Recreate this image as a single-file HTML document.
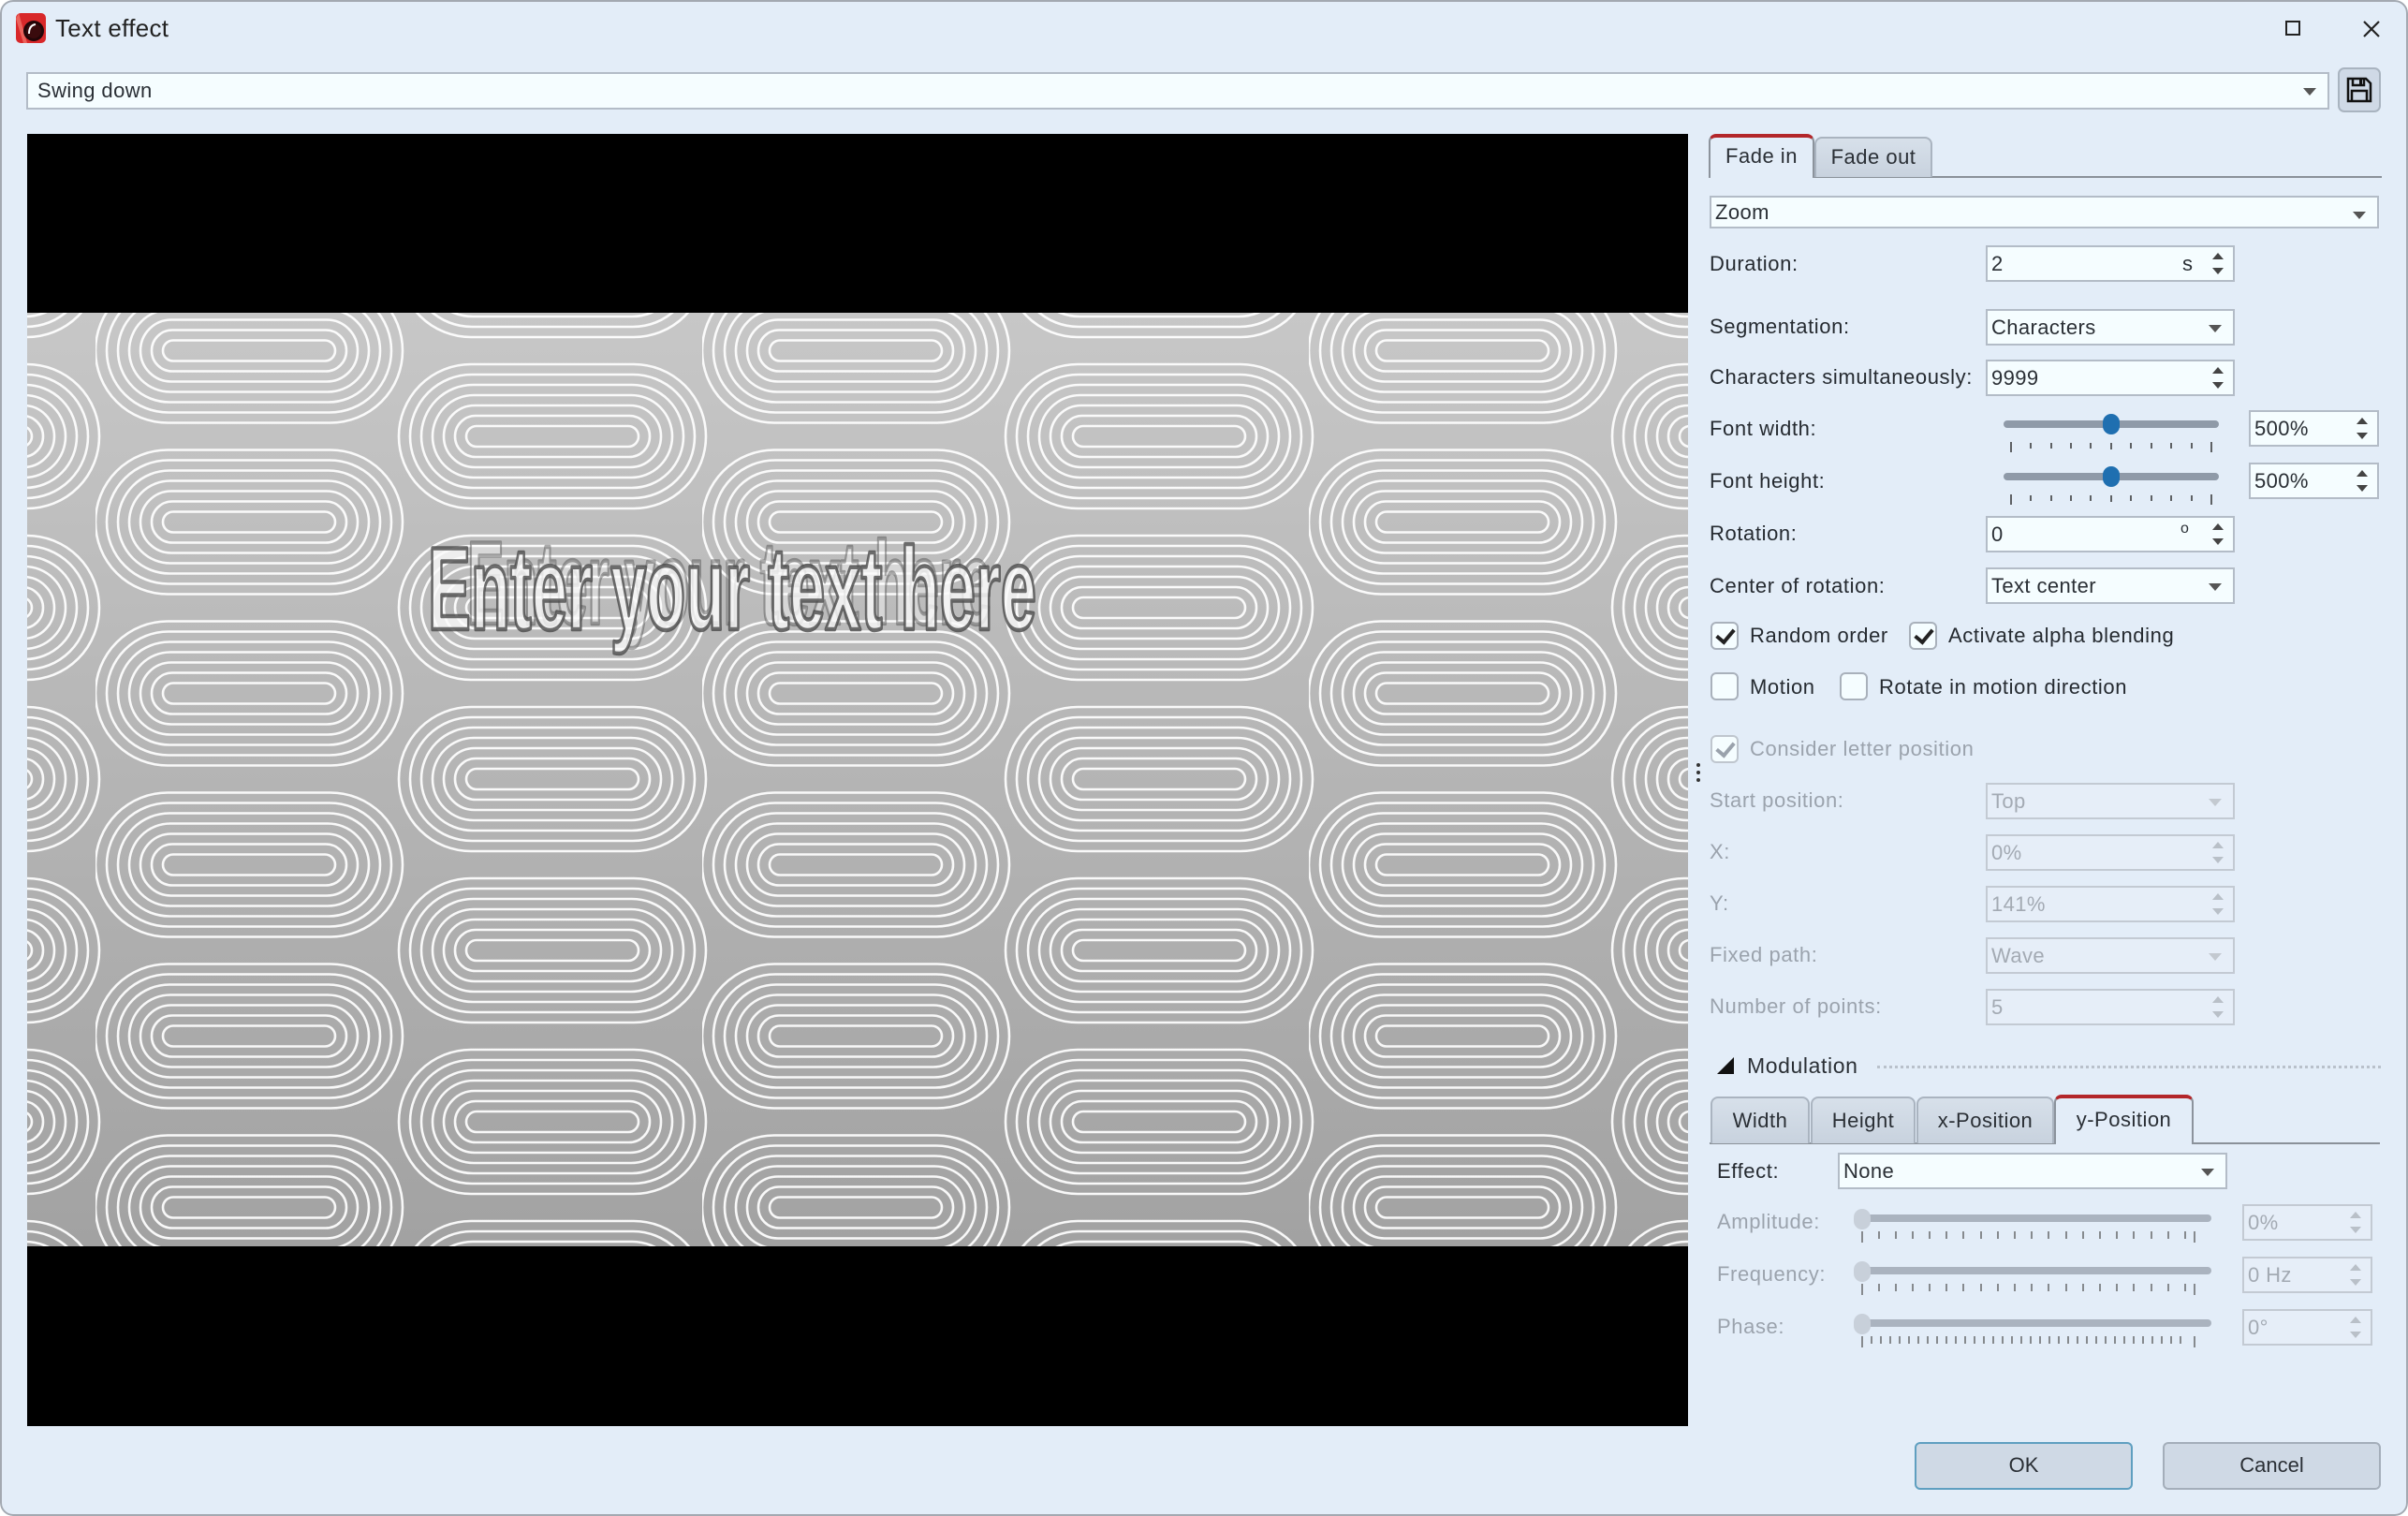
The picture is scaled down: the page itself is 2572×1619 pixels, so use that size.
<!DOCTYPE html>
<html><head><meta charset="utf-8"><style>
*{box-sizing:border-box;margin:0;padding:0}
body{width:2572px;height:1619px;overflow:hidden;background:#fff;font-family:"Liberation Sans",sans-serif;font-size:22px;color:#222}
#win{position:absolute;left:0;top:0;width:2572px;height:1619px;background:#e3edf8;border-radius:14px;overflow:hidden}
#in{position:absolute;left:1px;top:1px;width:2572px;height:1619px}
#bd{position:absolute;left:0;top:0;width:2572px;height:1619px;border:2px solid #a3a9b1;border-radius:14px;pointer-events:none}
.a{position:absolute}
.lbl{position:absolute;font-size:22px;color:#252a30;white-space:nowrap;line-height:26px;letter-spacing:.6px}
.dis{color:#9ba3ad}
.fld{position:absolute;background:#f5fdff;border:2px solid #b3bcc7;height:39px;font-size:22px;line-height:35px;padding-left:4px;color:#2a2f35;white-space:nowrap;letter-spacing:.4px}
.fld.d{color:#a3aab3;border-color:#c3cad3;background:#e6eef8}
.dd::after{content:"";position:absolute;right:12px;top:15px;border-left:7px solid transparent;border-right:7px solid transparent;border-top:8px solid #555}
.dd.d::after{border-top-color:#c3c9d0}
.sp::before{content:"";position:absolute;right:10px;top:6px;border-left:6px solid transparent;border-right:6px solid transparent;border-bottom:7px solid #444}
.sp::after{content:"";position:absolute;right:10px;bottom:6px;border-left:6px solid transparent;border-right:6px solid transparent;border-top:7px solid #444}
.sp.d::before{border-bottom-color:#b9c0c8}.sp.d::after{border-top-color:#b9c0c8}
.cb{position:absolute;width:30px;height:30px;border:2px solid #a9b1bb;border-radius:6px;background:#f5fdff}
.cb.on::after{content:"";position:absolute;left:8px;top:2px;width:8px;height:15px;border:solid #222;border-width:0 4px 4px 0;transform:rotate(40deg)}
.cb.dis2{border-color:#bfc6ce}.cb.dis2::after{border-color:#9aa2ac}
.tab{position:absolute;background:linear-gradient(#d7e0ea,#c8d2de);border:2px solid #aab4c0;border-bottom:none;border-radius:8px 8px 0 0;text-align:center;font-size:22px;color:#2a2f35;letter-spacing:.5px}
.tab.act{background:#e3edf8;border-color:#8c939c;border-top:4px solid #b3262a}
.trk{position:absolute;height:8px;border-radius:4px;background:#8f9aa8}
.thumb{position:absolute;width:18px;height:22px;border-radius:9px;background:#1f6fb0}
.btn{position:absolute;background:#cfd9e5;border:2px solid #a4aeba;border-radius:6px;text-align:center;font-size:22px;line-height:46px;color:#2a2f35}
</style></head><body>
<div id="win"><div id="in">
<svg class="a" style="left:16px;top:13px" width="32" height="32" viewBox="0 0 32 32"><rect width="32" height="32" rx="5" fill="#d8282a"/><path d="M3 0 L12 32 L8 32 L0 6Z" fill="#f47a70" opacity=".7"/><circle cx="19" cy="19" r="11" fill="#220608"/><circle cx="19" cy="19" r="8" fill="#3a0b0d"/><path d="M14 22 Q14 13 21 12" stroke="#fff" stroke-width="2" fill="none"/></svg>
<div class="lbl" style="left:58px;top:13px;font-size:26px;line-height:32px;color:#222;letter-spacing:.3px">Text effect</div>
<div class="a" style="left:2440px;top:21px;width:16px;height:16px;border:2px solid #222"></div>
<svg class="a" style="left:2523px;top:21px" width="18" height="18"><path d="M1 1L17 17M17 1L1 17" stroke="#222" stroke-width="2.2"/></svg>
<div class="fld dd" style="left:27px;top:76px;width:2460px;height:40px;background:#f5fdff;line-height:36px;padding-left:10px">Swing down</div>
<div class="a" style="left:2496px;top:71px;width:46px;height:48px;background:#cfd9e6;border:2px solid #a9b4c0;border-radius:7px"></div>
<svg class="a" style="left:2505px;top:81px" width="28" height="28" viewBox="0 0 28 28"><path d="M2 2H21L26 7V26H2Z" fill="none" stroke="#111" stroke-width="2.5"/><path d="M7 2V9H19V2" fill="none" stroke="#111" stroke-width="2.5"/><rect x="14" y="3" width="3" height="5" fill="#111"/><path d="M6 26V15H22V26" fill="none" stroke="#111" stroke-width="2.5"/></svg>
<div class="a" style="left:28px;top:142px;width:1774px;height:1380px;background:#000"></div>
<svg class="a" style="left:28px;top:333px" width="1774" height="997">
<defs>
<linearGradient id="g" x1="0" y1="0" x2="0" y2="1"><stop offset="0" stop-color="#c7c7c7"/><stop offset="1" stop-color="#a2a2a2"/></linearGradient>
<g id="pill" fill="none" stroke="#fff" stroke-width="2.6" opacity=".92">
<rect x="-92" y="-11" width="184" height="22" rx="11"/>
<rect x="-104" y="-22" width="208" height="44" rx="22"/>
<rect x="-116" y="-33" width="232" height="66" rx="33"/>
<rect x="-128" y="-44" width="256" height="88" rx="44"/>
<rect x="-140" y="-55" width="280" height="110" rx="55"/>
<rect x="-152" y="-66" width="304" height="132" rx="66"/>
<rect x="-164" y="-77" width="328" height="154" rx="77"/>
</g>
<pattern id="p" width="648" height="183" patternUnits="userSpaceOnUse" x="73" y="-51">
<use href="#pill" x="164" y="91.5"/>
<use href="#pill" x="488" y="0"/><use href="#pill" x="488" y="183"/>
<use href="#pill" x="-160" y="0"/><use href="#pill" x="-160" y="183"/>
</pattern>
</defs>
<rect width="1774" height="997" fill="url(#g)"/>
<rect width="1774" height="997" fill="url(#p)"/>
<g font-family="Liberation Sans" font-weight="bold" font-size="125" fill="rgba(250,250,250,.8)" stroke="#4a4a4a" stroke-width="4.5" stroke-opacity=".8" stroke-linejoin="round">
<text x="470" y="332" textLength="560" lengthAdjust="spacingAndGlyphs" stroke-opacity=".45" fill="rgba(255,255,255,.4)">Enter your text here</text>
<text x="428" y="338" textLength="650" lengthAdjust="spacingAndGlyphs">Enter your text here</text>
</g>
</svg>
<div class="a" style="left:1811px;top:814px;width:4px;height:4px;border-radius:2px;background:#333;box-shadow:0 8px 0 #333,0 16px 0 #333"></div>
<div class="a" style="left:1824px;top:187px;width:719px;height:2px;background:#8a9199"></div>
<div class="tab act" style="left:1824px;top:142px;width:113px;height:47px;line-height:40px">Fade in</div>
<div class="tab" style="left:1937px;top:145px;width:126px;height:43px;line-height:40px">Fade out</div>
<div class="fld dd" style="left:1825px;top:208px;width:715px;height:35px;line-height:31px">Zoom</div>

<div class="lbl" style="left:1825px;top:268px">Duration:</div>
<div class="fld sp" style="left:2120px;top:261px;width:266px">2<span class="a" style="left:208px;top:0">s</span></div>
<div class="lbl" style="left:1825px;top:335px">Segmentation:</div>
<div class="fld dd" style="left:2120px;top:329px;width:266px">Characters</div>
<div class="lbl" style="left:1825px;top:389px">Characters simultaneously:</div>
<div class="fld sp" style="left:2120px;top:383px;width:266px">9999</div>

<div class="lbl" style="left:1825px;top:444px">Font width:</div>
<div class="trk" style="left:2139px;top:448px;width:230px"></div>
<div class="thumb" style="left:2245px;top:441px"></div>
<svg class="a" style="left:2139px;top:465px" width="232" height="20"><g stroke="#333" stroke-width="1.5"><path d="M8 6V17M29 7V13M51 7V13M72 7V13M93 7V13M115 7V14M136 7V13M158 7V13M179 7V13M201 7V13M222 6V17"/></g></svg>
<div class="fld sp" style="left:2401px;top:437px;width:139px">500%</div>

<div class="lbl" style="left:1825px;top:500px">Font height:</div>
<div class="trk" style="left:2139px;top:504px;width:230px"></div>
<div class="thumb" style="left:2245px;top:497px"></div>
<svg class="a" style="left:2139px;top:521px" width="232" height="20"><g stroke="#333" stroke-width="1.5"><path d="M8 6V17M29 7V13M51 7V13M72 7V13M93 7V13M115 7V14M136 7V13M158 7V13M179 7V13M201 7V13M222 6V17"/></g></svg>
<div class="fld sp" style="left:2401px;top:493px;width:139px">500%</div>

<div class="lbl" style="left:1825px;top:556px">Rotation:</div>
<div class="fld sp" style="left:2120px;top:550px;width:266px">0<span class="a" style="left:206px;top:-6px;font-size:16px">o</span></div>
<div class="lbl" style="left:1825px;top:612px">Center of rotation:</div>
<div class="fld dd" style="left:2120px;top:605px;width:266px">Text center</div>

<div class="cb on" style="left:1826px;top:663px"></div><div class="lbl" style="left:1868px;top:665px">Random order</div>
<div class="cb on" style="left:2038px;top:663px"></div><div class="lbl" style="left:2080px;top:665px">Activate alpha blending</div>
<div class="cb" style="left:1826px;top:717px"></div><div class="lbl" style="left:1868px;top:720px">Motion</div>
<div class="cb" style="left:1964px;top:717px"></div><div class="lbl" style="left:2006px;top:720px">Rotate in motion direction</div>
<div class="cb on dis2" style="left:1826px;top:784px"></div><div class="lbl dis" style="left:1868px;top:786px">Consider letter position</div>

<div class="lbl dis" style="left:1825px;top:841px">Start position:</div>
<div class="fld dd d" style="left:2120px;top:835px;width:266px">Top</div>
<div class="lbl dis" style="left:1825px;top:896px">X:</div>
<div class="fld sp d" style="left:2120px;top:890px;width:266px">0%</div>
<div class="lbl dis" style="left:1825px;top:951px">Y:</div>
<div class="fld sp d" style="left:2120px;top:945px;width:266px">141%</div>
<div class="lbl dis" style="left:1825px;top:1006px">Fixed path:</div>
<div class="fld dd d" style="left:2120px;top:1000px;width:266px">Wave</div>
<div class="lbl dis" style="left:1825px;top:1061px">Number of points:</div>
<div class="fld sp d" style="left:2120px;top:1055px;width:266px">5</div>

<svg class="a" style="left:1832px;top:1127px" width="20" height="20"><path d="M19 1V19H1Z" fill="#111"/></svg>
<div class="lbl" style="left:1865px;top:1124px;font-size:23px;color:#2a2f35">Modulation</div>
<div class="a" style="left:2004px;top:1137px;width:538px;border-top:3px dotted #b9c1cb"></div>

<div class="a" style="left:1825px;top:1219px;width:716px;height:2px;background:#8a9199"></div>
<div class="tab" style="left:1826px;top:1170px;width:106px;height:50px;line-height:48px">Width</div>
<div class="tab" style="left:1933px;top:1170px;width:112px;height:50px;line-height:48px">Height</div>
<div class="tab" style="left:2046px;top:1170px;width:147px;height:50px;line-height:48px">x-Position</div>
<div class="tab act" style="left:2193px;top:1168px;width:149px;height:53px;line-height:46px">y-Position</div>

<div class="lbl" style="left:1833px;top:1237px">Effect:</div>
<div class="fld dd" style="left:1962px;top:1230px;width:416px">None</div>

<div class="lbl dis" style="left:1833px;top:1291px">Amplitude:</div>
<div class="lbl dis" style="left:1833px;top:1347px">Frequency:</div>
<div class="lbl dis" style="left:1833px;top:1403px">Phase:</div>
<div class="trk" style="left:1983px;top:1296px;width:378px;background:#aab3bf"></div>
<div class="trk" style="left:1983px;top:1352px;width:378px;background:#aab3bf"></div>
<div class="trk" style="left:1983px;top:1408px;width:378px;background:#aab3bf"></div>
<div class="thumb" style="left:1979px;top:1290px;background:#c8d0da"></div>
<div class="thumb" style="left:1979px;top:1346px;background:#c8d0da"></div>
<div class="thumb" style="left:1979px;top:1402px;background:#c8d0da"></div>
<svg class="a" style="left:1979px;top:1310px" width="380" height="130"><g stroke="#555" stroke-width="1.3">
<path d="M9 4V16M27 4V12M45 4V12M63 4V12M81 4V12M99 4V12M117 4V12M136 4V12M154 4V12M172 4V12M190 4V12M208 4V12M227 4V12M245 4V12M263 4V12M281 4V12M299 4V12M318 4V12M336 4V12M354 4V12M364 4V16"/>
<path transform="translate(0,56)" d="M9 4V16M27 4V12M45 4V12M63 4V12M81 4V12M99 4V12M117 4V12M136 4V12M154 4V12M172 4V12M190 4V12M208 4V12M227 4V12M245 4V12M263 4V12M281 4V12M299 4V12M318 4V12M336 4V12M354 4V12M364 4V16"/>
<path transform="translate(0,112)" d="M9 4V16M19 4V12M29 4V12M39 4V12M49 4V12M59 4V12M69 4V12M79 4V12M89 4V12M99 4V12M109 4V12M119 4V12M129 4V12M139 4V12M149 4V12M159 4V12M169 4V12M179 4V12M189 4V12M199 4V12M209 4V12M219 4V12M229 4V12M239 4V12M249 4V12M259 4V12M269 4V12M279 4V12M289 4V12M299 4V12M309 4V12M319 4V12M329 4V12M339 4V12M349 4V12M364 4V16"/>
</g></svg>
<div class="fld sp d" style="left:2394px;top:1285px;width:139px">0%</div>
<div class="fld sp d" style="left:2394px;top:1341px;width:139px">0 Hz</div>
<div class="fld sp d" style="left:2394px;top:1397px;width:139px">0°</div>

<div class="btn" style="left:2044px;top:1539px;width:233px;height:51px;border-color:#5f9fc0">OK</div>
<div class="btn" style="left:2309px;top:1539px;width:233px;height:51px">Cancel</div>
</div>
<div id="bd"></div>
</div>
</body></html>
